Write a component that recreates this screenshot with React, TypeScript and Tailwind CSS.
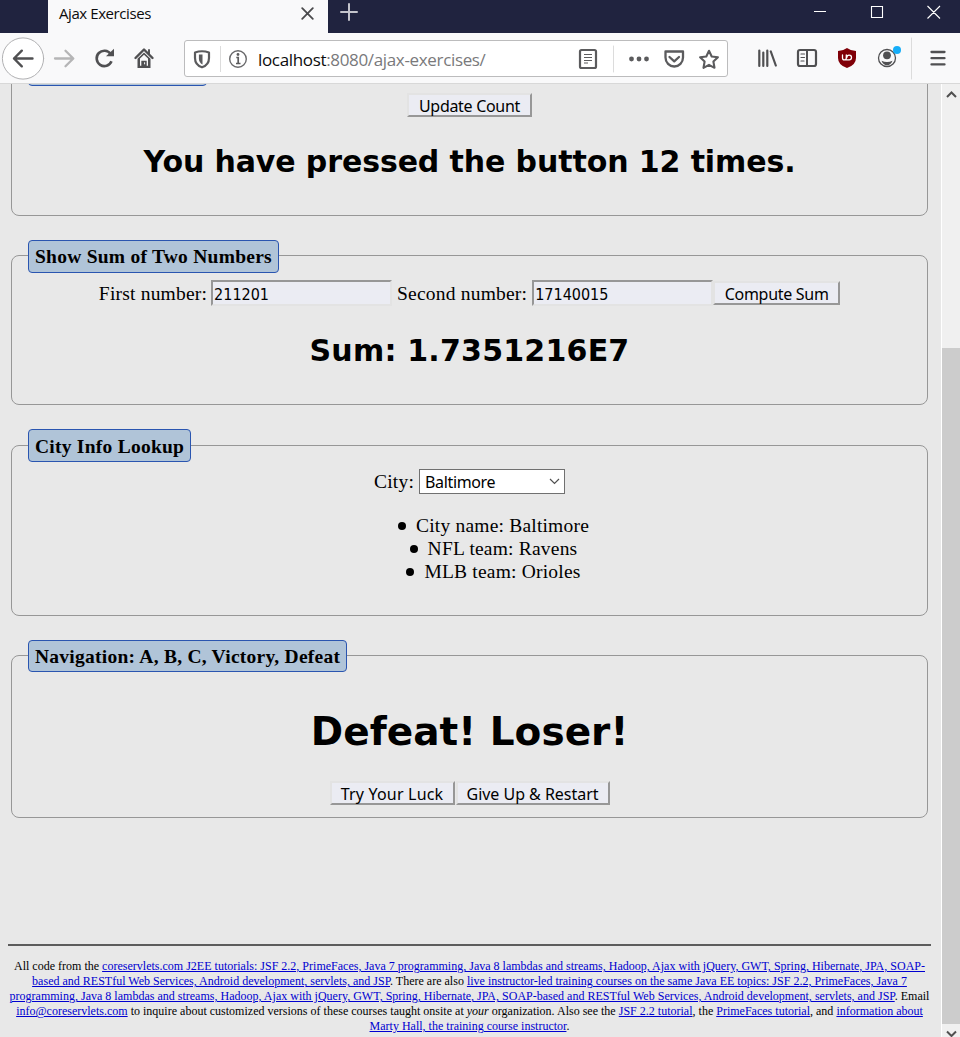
import type { ReactNode } from "react";

const UI = "font-['Open_Sans','Noto_Sans',sans-serif]";
const CONTROL = "font-['Noto_Sans',sans-serif] text-[16px] text-black";
const HEADING = "whitespace-nowrap font-['DejaVu_Sans',sans-serif] font-bold";

function Button({ children, className }: { children: ReactNode; className: string }) {
  return (
    <button
      className={`${CONTROL} flex h-6 shrink-0 items-center justify-center whitespace-nowrap border-2 border-t-[#e3e3e3] border-l-[#e3e3e3] border-r-[#979797] border-b-[#979797] bg-[#ebecf3] pt-px leading-none ${className}`}
    >
      {children}
    </button>
  );
}

function Input({ value }: { value: string }) {
  return (
    <input
      readOnly
      value={value}
      className="h-[26px] w-[181px] shrink-0 border-2 border-t-[#979797] border-l-[#979797] border-r-[#e3e3e3] border-b-[#e3e3e3] bg-[#ebecf3] pl-px pt-0.5 font-['DejaVu_Sans_Condensed','DejaVu_Sans',sans-serif] text-[16px] tracking-normal text-black outline-none"
    />
  );
}

function Panel({ title, className, legend, children }: { title: string; className: string; legend: string; children: ReactNode }) {
  return (
    <fieldset className={`mx-[3px] shrink-0 rounded-lg border border-[#979797] ${className}`}>
      <legend className={`ml-4 whitespace-nowrap rounded border border-[#2a55b0] bg-[#b0c4d8] pl-1.5 font-bold leading-[31px] tracking-[0.25px] ${legend}`}>
        {title}
      </legend>
      {children}
    </fieldset>
  );
}

function Bullet({ children }: { children: ReactNode }) {
  return (
    <li className="flex items-center justify-center gap-2.5">
      <span className="mt-px size-2 rounded-full bg-black" />
      <span>{children}</span>
    </li>
  );
}

function Link({ children }: { children: ReactNode }) {
  return <a className="text-[#0000d0] underline decoration-1">{children}</a>;
}

function TabBar() {
  return (
    <div className="flex h-[33px] bg-[#20233f]">
      <div className="ml-12 flex h-full w-[280px] items-start justify-between bg-[#f9f9fa] pl-[11px] pr-[14px]">
        <span className={`${UI} pt-[2px] text-[15px] leading-[22px] tracking-[-0.42px] text-[#0c0c0d]`}>Ajax Exercises</span>
        <svg className="mt-[7px]" width="13" height="13" viewBox="0 0 13 13" fill="none" stroke="#4a4a4c" strokeWidth="1.8" strokeLinecap="round">
          <path d="M1.2 1.2 11.8 11.8M11.8 1.2 1.2 11.8" />
        </svg>
      </div>
      <svg className="ml-3 mt-[3px]" width="18" height="18" viewBox="0 0 18 18" fill="none" stroke="#c4c4cc" strokeWidth="2" strokeLinecap="round">
        <path d="M9 1v16M1 9h16" />
      </svg>
      <svg className="ml-auto mr-[19px] mt-[5px]" width="128" height="14" viewBox="0 0 128 14" fill="none" stroke="#fff" strokeWidth="1.1">
        <path d="M1 6.5h12M58.5 1.5h11v11h-11zM114.5 1l12.5 12.5M127 1l-12.5 12.5" />
      </svg>
    </div>
  );
}

function Toolbar() {
  return (
    <div className="flex h-[51px] items-start border-b border-[#d8d8d8] bg-[#f9f9fa]">
      <svg className="shrink-0" width="184" height="50" viewBox="0 33 184 50" fill="none" strokeLinecap="round" strokeLinejoin="round">
        <circle cx="23" cy="58.5" r="20.6" fill="#fff" stroke="#b1b1b3" />
        <path d="M14 58.5h18.5M21.8 50.7 14 58.5l7.8 7.8" stroke="#505052" strokeWidth="2.4" />
        <path d="M55 58.5h18M65.5 50.7 73.3 58.5l-7.8 7.8" stroke="#b5b5b6" strokeWidth="2.3" />
        <path d="M110.7 54a7.7 7.7 0 1 0 .8 7.3" stroke="#505052" strokeWidth="2.6" strokeLinecap="butt" />
        <path d="M106 56.3h8v-7.6z" fill="#505052" />
        <path d="M135.5 58 144 49.5l8.5 8.5" stroke="#505052" strokeWidth="2.4" />
        <path d="M144 52.5l6.5 6.3V68h-13v-9.2z" fill="#505052" />
        <path d="M140 58.5l4-3.7 4 3.7v7.2h-1.3v-5h-5.4v5H140z" fill="#f9f9fa" />
        <path d="M142.3 61.5h3.4v6.5h-3.4z" fill="#505052" />
        <path d="M144.6 62.3v2" stroke="#f9f9fa" strokeWidth="1" strokeLinecap="butt" />
        <path d="M149 50v4" stroke="#505052" strokeWidth="1.9" />
      </svg>
      <div className="mt-[7px] flex h-[37px] w-[544px] shrink-0 items-center rounded-[3px] border border-[#bcbcbd] bg-white">
        <svg className="ml-2 shrink-0" width="62" height="30" viewBox="193 43 62 30" fill="none">
          <path d="M195 51.5q7-2.500 14 0v5.500q0 7-7 9.300q-7-2.300-7-9.300z" stroke="#5b5b5d" strokeWidth="2.2" strokeLinejoin="round" />
          <path d="M202.500 53.500h-3.600v4q0 4 3.600 6z" fill="#5b5b5d" />
          <path d="M220.500 45v26" stroke="#dcdcdc" />
          <circle cx="238" cy="58" r="8.3" stroke="#6a6a6c" strokeWidth="1.4" />
          <path d="M236.300 56.500h1.900v5.500M236 62.500h4.500" stroke="#5b5b5d" strokeWidth="1.7" />
          <circle cx="238" cy="53.5" r="1.4" fill="#5b5b5d" />
        </svg>
        <span className={`${UI} ml-[3px] mt-0.5 whitespace-nowrap text-[17px] leading-6 tracking-[-0.34px] text-[#79797b]`}>
          <span className="text-[#0c0c0d]">localhost</span>:8080/ajax-exercises/
        </span>
        <svg className="ml-auto mr-[7px] shrink-0" width="142" height="30" viewBox="578 43 142 30" fill="none" stroke="#5b5b5d" strokeLinejoin="round" strokeLinecap="round">
          <rect x="580" y="49" width="16" height="18" rx="1.5" strokeWidth="2.2" />
          <path d="M584 53.500h8M584 56.500h8M584 59.500h8M584 62h4" strokeWidth="1.2" strokeLinecap="butt" />
          <path d="M613.500 45v26" stroke="#dcdcdc" />
          <g fill="#5b5b5d" stroke="none">
            <circle cx="631.5" cy="58" r="2.4" />
            <circle cx="639" cy="58" r="2.4" />
            <circle cx="646.5" cy="58" r="2.4" />
          </g>
          <path d="M665.500 50.500h17.500v6a8.750 9 0 0 1-17.500 0z" strokeWidth="2.3" />
          <path d="m669.500 56 4.750 4.300 4.750-4.300" strokeWidth="2.3" />
          <path d="m709 49.800 2.700 5.700 6.200.8-4.500 4.300 1.100 6.200-5.500-3-5.500 3 1.100-6.200-4.500-4.300 6.200-.8z" strokeWidth="2.1" />
        </svg>
      </div>
      <svg className="shrink-0" width="232" height="50" viewBox="728 33 232 50" fill="none" stroke="#505052" strokeLinecap="round" strokeLinejoin="round">
        <path d="M759.300 50.500v15.500M763.300 52.500v13.500M767.300 50.500v15.500M770.800 51.500l5 14" strokeWidth="2.2" />
        <rect x="798" y="50" width="18" height="16" rx="2" strokeWidth="2.2" />
        <path d="M807 50v16" strokeWidth="2" />
        <path d="M801 54h3.500M801 57.500h3.500M801 61h3" strokeWidth="1.2" />
        <path d="M847 48q4 3 9 3v7q0 7-9 10q-9-3-9-10v-7q5 0 9-3z" fill="#800008" stroke="none" />
        <path d="M842.500 55v3a1.900 1.900 0 0 0 3.800 0v-3M846.300 59.900h2.800a2.350 2.350 0 1 0 -2.300-2.400" stroke="#fff" strokeWidth="1.3" />
        <circle cx="887" cy="58" r="8.5" strokeWidth="1.3" />
        <circle cx="887" cy="55.3" r="3.9" fill="#505052" stroke="none" />
        <path d="M881.500 60.800q5.500 2.500 11 0-1.700 4.400-5.500 4.400t-5.500-4.400z" fill="#505052" stroke="none" />
        <circle cx="897" cy="50" r="4" fill="#16adf8" stroke="none" />
        <path d="M911.500 38v41" stroke="#dcdcdc" />
        <path d="M931.500 52h13M931.500 58.200h13M931.500 64.400h13" strokeWidth="2.3" />
      </svg>
    </div>
  );
}

function Scrollbar() {
  return (
    <div className="flex w-[19px] shrink-0 flex-col border-l border-white bg-[#f0f0f0]">
      <svg className="shrink-0" width="18" height="264" viewBox="942 84 18 264" fill="none" stroke="#505050" strokeWidth="2">
        <path d="m947 97 4.500-4.500 4.500 4.500" />
      </svg>
      <div className="h-[676px] shrink-0 bg-[#cccccc]" />
      <svg className="shrink-0" width="18" height="13" viewBox="942 1024 18 13" fill="none" stroke="#505050" strokeWidth="2">
        <path d="m947 1031.500 4.500 4.500 4.500-4.500" />
      </svg>
    </div>
  );
}

export default function App() {
  return (
    <div className="flex h-[1037px] w-[960px] flex-col overflow-hidden bg-[#e8e8e8]">
      <TabBar />
      <Toolbar />
      <div className="flex min-h-0 flex-1">
        <main className="flex min-w-0 flex-1 flex-col overflow-hidden pl-2 pr-[10px] font-['Liberation_Serif',serif] text-[19.5px] leading-[23px] tracking-[0.2px] text-black">
          <Panel title="" legend="h-[33px] w-[179px]" className="-mt-[31px] h-[163px]">
            <div className="flex flex-col items-center pt-[7px]">
              <Button className="w-[125px] tracking-[-0.3px]">Update Count</Button>
              <h2 className={`${HEADING} mt-[27px] text-[30px] leading-9 tracking-[-0.11px]`}>You have pressed the button 12 times.</h2>
            </div>
          </Panel>
          <Panel title="Show Sum of Two Numbers" legend="h-[33px] w-[251px] translate-y-px" className="mt-[23px] h-[166px]">
            <div className="flex flex-col items-center pt-2">
              <div className="flex items-center">
                <label className="mr-1">First number:</label>
                <Input value="211201" />
                <label className="ml-[5px] mr-[5px]">Second number:</label>
                <Input value="17140015" />
                <Button className="w-[127px] tracking-[-0.28px]">Compute Sum</Button>
              </div>
              <h2 className={`${HEADING} mt-[27px] text-[30px] leading-9 tracking-[0.22px]`}>Sum: 1.7351216E7</h2>
            </div>
          </Panel>
          <Panel title="City Info Lookup" legend="h-[33px] w-[163px] pt-px" className="mt-6 h-[187px]">
            <div className="flex flex-col items-center pt-[7px]">
              <div className="flex items-center">
                <label className="mr-[5px]">City:</label>
                <div className={`${CONTROL} flex h-[25px] w-[146px] items-center justify-between border border-[#707070] bg-white pl-[5px] pr-1 leading-none tracking-[-0.35px]`}>
                  <span className="pt-px">Baltimore</span>
                  <svg width="11" height="7" viewBox="0 0 11 7" fill="none" stroke="#505050" strokeWidth="1.2">
                    <path d="m1 1 4.500 4.500L10 1" />
                  </svg>
                </div>
              </div>
              <ul className="mt-5 pl-12">
                <Bullet>City name: Baltimore</Bullet>
                <Bullet>NFL team: Ravens</Bullet>
                <Bullet>MLB team: Orioles</Bullet>
              </ul>
            </div>
          </Panel>
          <Panel title="Navigation: A, B, C, Victory, Defeat" legend="h-8 w-[319px] translate-y-px" className="mt-[23px] h-[179px]">
            <div className="flex flex-col items-center pt-[37px]">
              <h1 className={`${HEADING} text-[39px] leading-[48px] tracking-[0.04px]`}>Defeat! Loser!</h1>
              <div className="mt-[25px] flex gap-px">
                <Button className="w-[125px] tracking-[0.2px]">Try Your Luck</Button>
                <Button className="w-[154px] tracking-[-0.03px]">Give Up &amp; Restart</Button>
              </div>
            </div>
          </Panel>
          <footer className="mt-[126px] border-t-2 border-[#5c5c5c] pt-[13px] text-center text-[12px] leading-[15px] tracking-[0.007px]">
            <div className="whitespace-nowrap">
              All code from the{" "}
              <Link>
                coreservlets.com J2EE tutorials: JSF 2.2, PrimeFaces, Java 7 programming, Java 8 lambdas and streams, Hadoop, Ajax with jQuery, GWT, Spring, Hibernate, JPA, SOAP-
                <br />
                based and RESTful Web Services, Android development, servlets, and JSP
              </Link>
              . There are also{" "}
              <Link>
                live instructor-led training courses on the same Java EE topics: JSF 2.2, PrimeFaces, Java 7
                <br />
                programming, Java 8 lambdas and streams, Hadoop, Ajax with jQuery, GWT, Spring, Hibernate, JPA, SOAP-based and RESTful Web Services, Android development, servlets, and JSP
              </Link>
              . Email
              <br />
              <Link>info@coreservlets.com</Link> to inquire about customized versions of these courses taught onsite at <em>your</em> organization. Also see the{" "}
              <Link>JSF 2.2 tutorial</Link>, the <Link>PrimeFaces tutorial</Link>, and{" "}
              <Link>
                information about
                <br />
                Marty Hall, the training course instructor
              </Link>
              .
            </div>
          </footer>
        </main>
        <Scrollbar />
      </div>
    </div>
  );
}
